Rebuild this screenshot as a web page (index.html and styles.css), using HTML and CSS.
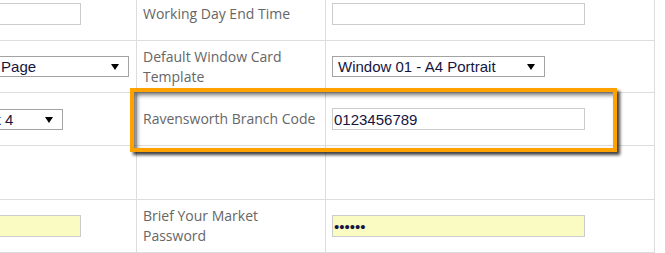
FILE: index.html
```html
<!DOCTYPE html>
<html lang="en">

<head>
    <meta charset="UTF-8">
    <meta name="viewport" content="width=device-width, initial-scale=1.0">
    <title>Branch Settings</title>
    <link rel="stylesheet" href="styles.css">
</head>

<body>
    <div class="settings">
        <div class="cell"><input class="field field-short" type="text"></div>
        <div class="cell label">Working Day End Time</div>
        <div class="cell"><input class="field" type="text"></div>

        <div class="cell">
            <span class="picker">
                <select class="choice choice-wide">
                    <option>Tax Invoice - A4 Page</option>
                </select>
            </span>
        </div>
        <div class="cell label">Default Window Card Template</div>
        <div class="cell">
            <span class="picker">
                <select class="choice">
                    <option>Window 01 - A4 Portrait</option>
                </select>
            </span>
        </div>

        <div class="cell">
            <span class="picker">
                <select class="choice choice-small">
                    <option>Reception Desk 4</option>
                </select>
            </span>
        </div>
        <div class="cell label">Ravensworth Branch Code</div>
        <div class="cell"><input class="field" type="text" value="0123456789"></div>

        <div class="cell"></div>
        <div class="cell"></div>
        <div class="cell"></div>

        <div class="cell"><input class="field field-short required" type="text"></div>
        <div class="cell label">Brief Your Market Password</div>
        <div class="cell"><input class="field required" type="password" value="secret"></div>

        <div class="highlight"></div>
    </div>
</body>
</html>
```

FILE: styles.css
```css
body {
    margin: 0;
    padding: 0;
    background-color: #fff;
    overflow: hidden;
    font-family: 'Open Sans', sans-serif;
}

.settings {
    position: relative;
    display: grid;
    grid-template-columns: 257px 188px 328px;
    grid-template-rows: 53px 51px 52px 53px 52px;
    gap: 1px;
    width: max-content;
    margin: -14px 0 0 -122px;
    background-color: #dddddd;
    border: 1px solid #dddddd;
}

.cell {
    display: flex;
    align-items: center;
    padding: 0 6px;
    background-color: #fff;
}

.label {
    padding-right: 2px;
    font-size: 14px;
    line-height: 20px;
    color: #666;
}

.field {
    box-sizing: border-box;
    width: 253px;
    height: 22px;
    margin: 0;
    padding: 0 1px;
    border: 1px solid #cccccc;
    background-color: #fff;
    font-family: 'Liberation Sans', Arial, sans-serif;
    font-size: 15px;
    color: #15153f;
    outline: none;
}

.field-short {
    width: 196px;
}

.required {
    background-color: #fafbc3;
}

.picker {
    position: relative;
    display: inline-block;
}

.picker::after {
    content: '';
    position: absolute;
    right: 10px;
    top: 8px;
    border-left: 4px solid transparent;
    border-right: 4px solid transparent;
    border-top: 6px solid #000;
    pointer-events: none;
}

.choice {
    appearance: none;
    -webkit-appearance: none;
    box-sizing: border-box;
    display: block;
    width: 213px;
    height: 21px;
    margin: 0;
    padding: 0 0 0 5px;
    border: 1px solid #a3a3a3;
    border-radius: 0;
    background-color: #fff;
    font-family: 'Liberation Sans', Arial, sans-serif;
    font-size: 15px;
    line-height: 19px;
    color: #15153f;
}

.choice-wide {
    width: 244px;
}

.choice-small {
    width: 178px;
    padding-left: 9px;
}

.highlight {
    position: absolute;
    left: 251px;
    top: 101px;
    width: 487px;
    height: 64px;
    box-sizing: border-box;
    border: 4px solid #ffa200;
    box-shadow: 3px 3px 3px rgba(0, 0, 0, 0.75), inset 3px 3px 4px rgba(0, 0, 0, 0.55);
    pointer-events: none;
}
```
